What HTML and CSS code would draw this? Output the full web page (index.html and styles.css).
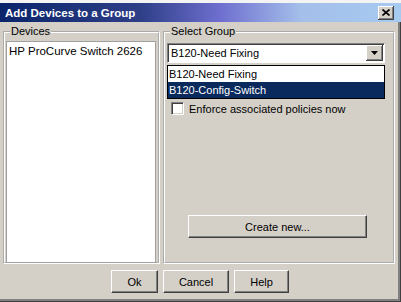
FILE: index.html
```html
<!DOCTYPE html>
<html lang="en">
<head>
    <meta charset="utf-8">
    <title>Add Devices to a Group</title>
    <link rel="stylesheet" href="styles.css">
</head>
<body>
    <div class="window">
        <!-- Title bar -->
        <div class="titlebar">
            <span class="title">Add Devices to a Group</span>
            <span class="close">
                <svg width="8" height="7" viewBox="0 0 8 7"><path d="M0.5 0.5 L7.5 6.5 M7.5 0.5 L0.5 6.5" stroke="#000" stroke-width="1.6"/></svg>
            </span>
        </div>
        <div class="content">
            <!-- Devices -->
            <fieldset class="group devices">
                <legend>Devices</legend>
                <div class="listbox">
                    <div class="list-item">HP ProCurve Switch 2626</div>
                </div>
            </fieldset>
            <!-- Select Group -->
            <fieldset class="group select-group">
                <legend>Select Group</legend>
                <div class="group-body">
                    <div class="combo">
                        <span class="combo-value">B120-Need Fixing</span>
                        <span class="combo-button">
                            <svg width="7" height="4" viewBox="0 0 7 4"><path d="M0 0 H7 L3.5 4 Z" fill="#000"/></svg>
                        </span>
                    </div>
                    <ul class="dropdown">
                        <li>B120-Need Fixing</li>
                        <li class="selected">B120-Config-Switch</li>
                    </ul>
                    <label class="check">
                        <span class="checkbox"></span>
                        Enforce associated policies now
                    </label>
                    <button class="btn create-button">Create new...</button>
                </div>
            </fieldset>
        </div>
        <!-- Dialog buttons -->
        <div class="actions">
            <button class="btn ok-button">Ok</button>
            <button class="btn cancel-button">Cancel</button>
            <button class="btn help-button">Help</button>
        </div>
    </div>
</body>
</html>
```

FILE: styles.css
```css
* {
    box-sizing: border-box;
}
body {
    margin: 0;
    background: #d4d0c8;
    font-family: "Liberation Sans", Arial, sans-serif;
    font-size: 11px;
    color: #000;
}
.window {
    width: 401px;
    height: 302px;
    background: #d4d0c8;
    border-top: 3px solid #f4f4f4;
    box-shadow: inset -1px -1px #404040, inset -3px -3px #808080;
}
/* Title bar */
.titlebar {
    height: 19px;
    display: flex;
    align-items: center;
    justify-content: space-between;
    padding: 0 7px 0 5px;
    background: linear-gradient(90deg, #0a246a 0%, #2e3f88 35%, #6f6fcf 55%, #a4bfea 75%, #a6caf0 100%);
}
.title {
    color: #fff;
    font-weight: bold;
    font-size: 11.5px;
}
.close {
    width: 16px;
    height: 14px;
    display: flex;
    align-items: center;
    justify-content: center;
    background: #d4d0c8;
    box-shadow: inset -1px -1px #404040, inset 1px 1px #fff, inset -2px -2px #808080;
}
/* Group boxes */
.content {
    display: flex;
    gap: 3px;
    height: 245px;
    padding: 3px 6px 0 3px;
}
.group {
    margin: 0;
    padding: 0 2px 2px 1px;
    border: 2px groove #fff;
    height: 239px;
    min-width: 0;
}
.group legend {
    padding: 0 1px;
    margin-left: 4px;
    line-height: 13px;
}
.devices {
    width: 157px;
}
.select-group {
    flex: 1;
}
.listbox {
    height: 100%;
    margin-top: 3px;
    background: #fff;
    border: 1px solid #a0a0a0;
    padding: 3px 2px;
    font-size: 11.5px;
}
.group-body {
    display: flex;
    flex-direction: column;
    height: 100%;
    padding-top: 5px;
}
.combo {
    width: 218px;
    height: 20px;
    margin-left: 1px;
    display: flex;
    align-items: center;
    justify-content: space-between;
    background: #fff;
    border: 1px solid;
    border-color: #808080 #fff #fff #808080;
    box-shadow: inset 1px 1px #404040;
    padding: 0 1px 0 3px;
}
.combo-button {
    width: 17px;
    height: 16px;
    display: flex;
    align-items: center;
    justify-content: center;
    background: #d4d0c8;
    box-shadow: inset -1px -1px #404040, inset 1px 1px #fff, inset -2px -2px #808080;
}
.dropdown {
    list-style: none;
    margin: 2px 0 0 1px;
    padding: 0;
    width: 218px;
    border: 1px solid #000;
    background: #fff;
}
.dropdown li {
    height: 16px;
    line-height: 16px;
    padding-left: 1px;
}
.dropdown li.selected {
    background: #0a2a5e;
    color: #fff;
}
.check {
    display: flex;
    align-items: center;
    gap: 5px;
    margin: 3px 0 0 5px;
}
.checkbox {
    width: 13px;
    height: 13px;
    background: #fff;
    border: 1px solid;
    border-color: #808080 #fff #fff #808080;
    box-shadow: inset 1px 1px #404040, inset -1px -1px #d4d0c8;
}
/* Buttons */
.btn {
    height: 23px;
    font-family: inherit;
    font-size: 11px;
    color: #000;
    background: #d4d0c8;
    border: 1px solid;
    border-color: #fff #404040 #404040 #fff;
    box-shadow: inset -1px -1px #808080;
    padding: 0;
}
.create-button {
    width: 179px;
    margin: auto 0 22px 22px;
}
.actions {
    display: flex;
    justify-content: center;
    gap: 5px;
    padding: 3px 1px 0 0;
}
.ok-button {
    width: 47px;
}
.cancel-button {
    width: 66px;
}
.help-button {
    width: 55px;
}
```
